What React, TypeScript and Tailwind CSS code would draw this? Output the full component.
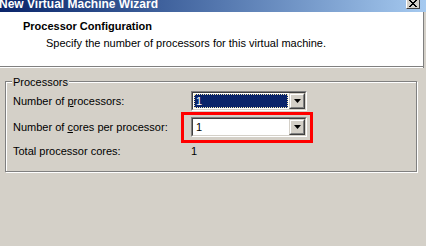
import React from "react";

function Combo({ selected }: { selected?: boolean }) {
  return (
    <div className="h-[20px] w-[116px] border border-t-[#808080] border-l-[#808080] border-b-white border-r-white">
      <div className="h-full w-full border border-t-[#404040] border-l-[#404040] border-b-[#d4d0c8] border-r-[#d4d0c8] bg-white flex">
        <div className="flex-1 p-px flex">
          {selected ? (
            <div className="flex-1 bg-[#0a246a] border border-dotted border-[#f4e9b0] text-white pl-[1px] leading-[12px] flex items-center">
              1
            </div>
          ) : (
            <div className="flex-1 text-black pl-[2px] flex items-center">1</div>
          )}
        </div>
        <div className="w-[16px] h-full bg-[#d4d0c8] border border-t-[#d4d0c8] border-l-[#d4d0c8] border-b-[#404040] border-r-[#404040]">
          <div className="w-full h-full border border-t-white border-l-white border-b-[#808080] border-r-[#808080] flex items-center justify-center">
            <svg width="7" height="4" viewBox="0 0 7 4">
              <polygon points="0,0 7,0 3.5,4" fill="#000" />
            </svg>
          </div>
        </div>
      </div>
    </div>
  );
}

export default function App() {
  return (
    <div
      className="w-[426px] h-[246px] overflow-hidden bg-[#d4d0c8] flex flex-col text-[11px] text-black"
      style={{ fontFamily: '"Liberation Sans", Arial, sans-serif' }}
    >
      {/* Title bar */}
      <div className="h-[12px] shrink-0 bg-gradient-to-r from-[#0a246a] to-[#a6caf0] flex items-start justify-between overflow-hidden">
        <div className="mt-[-2px] ml-[-1px] text-white font-bold leading-[13px] text-[12px]">
          New Virtual Machine Wizard
        </div>
        <div className="mt-[-6px] mr-[6px] w-[14px] h-[15px] bg-[#d4d0c8] border border-t-white border-l-white border-b-[#404040] border-r-[#404040] flex items-end justify-center">
          <svg width="8" height="7" viewBox="0 0 8 7" className="mb-[1px]">
            <path d="M0 0 L7 7 M1 0 L8 7 M7 0 L0 7 M8 0 L1 7" stroke="#000" strokeWidth="1" />
          </svg>
        </div>
      </div>

      {/* Header */}
      <div className="shrink-0 flex">
        <div className="w-[424px] border-r border-r-[#808080]">
          <div className="h-[54px] bg-white pt-[8px]">
            <div className="pl-[23px] font-bold leading-[13px]">Processor Configuration</div>
            <div className="pl-[46px] mt-[4px] leading-[13px]">
              Specify the number of processors for this virtual machine.
            </div>
          </div>
          <div className="h-px bg-[#808080]" />
          <div className="h-px bg-white" />
        </div>
      </div>

      {/* Group box */}
      <div className="mt-[13px] ml-[5px] w-[412px] h-[91px] border border-[#808080] shadow-[inset_1px_1px_0_#fff,1px_1px_0_#fff] pl-[7px]">
        <div className="-mt-[6px] -ml-[1px] px-px w-fit bg-[#d4d0c8] leading-[13px]">Processors</div>
        <div className="mt-[2px] flex flex-col">
          <div className="flex items-center h-[20px]">
            <div className="w-[178px]">
              Number of <span className="underline">p</span>rocessors:
            </div>
            <Combo selected />
          </div>
          <div className="flex items-center h-[20px] mt-[6px]">
            <div className="w-[178px]">
              Number of <span className="underline">c</span>ores per processor:
            </div>
            <div className="relative">
              <Combo />
              <div className="absolute left-[-10px] top-[-5px] w-[132px] h-[31px] border-[3px] border-[#ff0000]" />
            </div>
          </div>
          <div className="flex items-center h-[13px] mt-[8px]">
            <div className="w-[178px]">Total processor cores:</div>
            <div>1</div>
          </div>
        </div>
      </div>
    </div>
  );
}
